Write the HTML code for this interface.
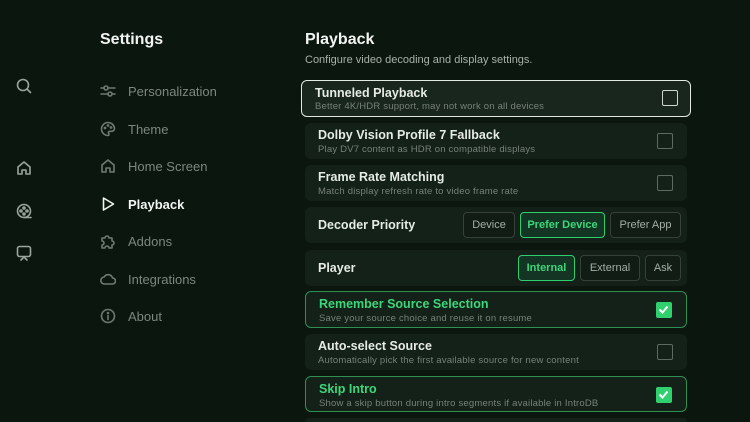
<!DOCTYPE html>
<html style="width:750px;height:422px;overflow:hidden"><head><meta charset="utf-8"><style>
*{box-sizing:border-box;margin:0;padding:0}
body{width:750px;height:422px;overflow:hidden;background:#0a160e;font-family:"Liberation Sans",sans-serif;position:relative;color:#e8ece8}
.a{position:absolute}
.ic{position:absolute;stroke:#9aa59c;fill:none;stroke-width:1.6;stroke-linecap:round;stroke-linejoin:round}
.nav{position:absolute;left:128px;font-size:13px;color:#7d877f}
.row{position:absolute;left:305px;width:382px;height:36px;background:#132118;border-radius:6px}
.t{position:absolute;left:13px;top:5px;font-size:12.5px;font-weight:bold;color:#e6ebe6}
.s{position:absolute;left:13px;top:21px;font-size:9.5px;color:#76817a;letter-spacing:.2px}
.cb{position:absolute;width:16px;height:16px;border:1.5px solid #5f6a62;border-radius:2px;right:14px;top:10px}
.on{background:#2fd06d;border-color:#2fd06d}
.g{color:#3cd77a}
.gb{border:1px solid #2f8f55}
.btn{position:absolute;height:26px;border:1px solid #35413a;border-radius:4px;font-size:11px;color:#a4aea6;text-align:center;line-height:24px;background:#101c14}
.sel{border-color:#2fcf70;color:#3cd77a;background:#153524;font-weight:bold}
.lbl{position:absolute;left:13px;top:11px;font-size:12.5px;font-weight:bold;color:#e6ebe6}
</style></head><body>
<svg class="ic" style="left:15px;top:77px" width="18" height="18" viewBox="0 0 18 18"><circle cx="8" cy="8" r="5.5"/><path d="M12 12l3.5 3.5"/></svg>
<svg class="ic" style="left:15px;top:159px" width="18" height="18" viewBox="0 0 18 18"><path d="M3 8l6-5 6 5v7h-4v-4h-4v4H3z"/></svg>
<svg class="ic" style="left:15px;top:202px" width="18" height="18" viewBox="0 0 18 18"><circle cx="9" cy="9" r="6.5"/><circle cx="9" cy="6" r="1"/><circle cx="6" cy="9" r="1"/><circle cx="12" cy="9" r="1"/><circle cx="9" cy="12" r="1"/><path d="M9 15.5h7"/></svg>
<svg class="ic" style="left:15px;top:244px" width="18" height="18" viewBox="0 0 18 18"><rect x="2.5" y="2.5" width="13" height="10" rx="2"/><path d="M6 16l3-3 3 3"/></svg>
<div class="a" style="left:100px;top:31px;font-size:16px;font-weight:bold;color:#f2f4f2">Settings</div>
<svg class="ic" style="left:100px;top:83px;stroke:#6f7a72" width="16" height="16" viewBox="0 0 16 16"><path d="M1 5h3M8 5h7M1 11h7M12 11h3"/><circle cx="6" cy="5" r="2"/><circle cx="10" cy="11" r="2"/></svg>
<div class="nav" style="top:84px">Personalization</div>
<svg class="ic" style="left:100px;top:121px;stroke:#6f7a72" width="16" height="16" viewBox="0 0 16 16"><path d="M8 1.5a6.5 6.5 0 1 0 0 13c1.2 0 1.2-1.5.6-2.3-.6-.8 0-1.9 1-1.9h2a2.9 2.9 0 0 0 2.9-3A6.5 6.5 0 0 0 8 1.5z"/><circle cx="5" cy="7" r=".6"/><circle cx="8" cy="4.5" r=".6"/><circle cx="11" cy="6.5" r=".6"/></svg>
<div class="nav" style="top:122px">Theme</div>
<svg class="ic" style="left:100px;top:158px;stroke:#6f7a72" width="16" height="16" viewBox="0 0 16 16"><path d="M2 7l6-5 6 5v7h-4v-4H6v4H2z"/></svg>
<div class="nav" style="top:159px">Home Screen</div>
<svg class="ic" style="left:100px;top:196px;stroke:#f2f4f2" width="16" height="16" viewBox="0 0 16 16"><path d="M3.5 2l10 6-10 6z"/></svg>
<div class="nav" style="top:197px;color:#f4f6f4;font-weight:bold">Playback</div>
<svg class="ic" style="left:100px;top:233px;stroke:#6f7a72" width="16" height="16" viewBox="0 0 16 16"><path d="M2 5h3a2 2 0 1 1 4 0h3v3a2 2 0 1 1 0 4v3H9a2 2 0 1 0-4 0H2v-3a2 2 0 1 0 0-4z"/></svg>
<div class="nav" style="top:234px">Addons</div>
<svg class="ic" style="left:100px;top:271px;stroke:#6f7a72" width="16" height="16" viewBox="0 0 16 16"><path d="M4.5 13a3.5 3.5 0 0 1-.3-7A4.5 4.5 0 0 1 12.5 7a3 3 0 0 1 0 6z"/></svg>
<div class="nav" style="top:272px">Integrations</div>
<svg class="ic" style="left:100px;top:308px;stroke:#6f7a72" width="16" height="16" viewBox="0 0 16 16"><circle cx="8" cy="8" r="6.5"/><path d="M8 7.5v4"/><circle cx="8" cy="5" r=".5"/></svg>
<div class="nav" style="top:309px">About</div>

<div class="a" style="left:305px;top:31px;font-size:16px;font-weight:bold;color:#f2f4f2">Playback</div>
<div class="a" style="left:305px;top:54px;font-size:11px;color:#a8b1aa">Configure video decoding and display settings.</div>

<div class="row" style="left:301px;top:80px;width:390px;height:37px;border:1.5px solid #e4e8e4;background:#18261d"><div class="t" style="top:5px">Tunneled Playback</div><div class="s" style="top:20px">Better 4K/HDR support, may not work on all devices</div><div class="cb" style="border-color:#cfd5d0;top:9px;right:12px"></div></div>
<div class="row" style="top:123px"><div class="t">Dolby Vision Profile 7 Fallback</div><div class="s">Play DV7 content as HDR on compatible displays</div><div class="cb"></div></div>
<div class="row" style="top:165px"><div class="t">Frame Rate Matching</div><div class="s">Match display refresh rate to video frame rate</div><div class="cb"></div></div>
<div class="row" style="top:207px"><div class="lbl">Decoder Priority</div>
<div class="btn" style="left:158px;top:5px;width:52px">Device</div>
<div class="btn sel" style="left:215px;top:5px;width:85px">Prefer Device</div>
<div class="btn" style="left:305px;top:5px;width:71px">Prefer App</div></div>
<div class="row" style="top:250px"><div class="lbl">Player</div>
<div class="btn sel" style="left:213px;top:5px;width:57px">Internal</div>
<div class="btn" style="left:275px;top:5px;width:60px">External</div>
<div class="btn" style="left:340px;top:5px;width:36px">Ask</div></div>
<div class="row gb" style="top:291px;height:37px"><div class="t g">Remember Source Selection</div><div class="s">Save your source choice and reuse it on resume</div><div class="cb on"><svg width="13" height="13" viewBox="0 0 13 13" style="position:absolute;left:0;top:0"><path d="M2.5 6.5l3 3 5-6" stroke="#fff" stroke-width="2" fill="none"/></svg></div></div>
<div class="row" style="top:334px"><div class="t">Auto-select Source</div><div class="s">Automatically pick the first available source for new content</div><div class="cb"></div></div>
<div class="row gb" style="top:376px"><div class="t g">Skip Intro</div><div class="s">Show a skip button during intro segments if available in IntroDB</div><div class="cb on"><svg width="13" height="13" viewBox="0 0 13 13" style="position:absolute;left:0;top:0"><path d="M2.5 6.5l3 3 5-6" stroke="#fff" stroke-width="2" fill="none"/></svg></div></div>
<div class="row" style="top:418px;height:4px;border-radius:6px 6px 0 0"></div>
</body></html>
